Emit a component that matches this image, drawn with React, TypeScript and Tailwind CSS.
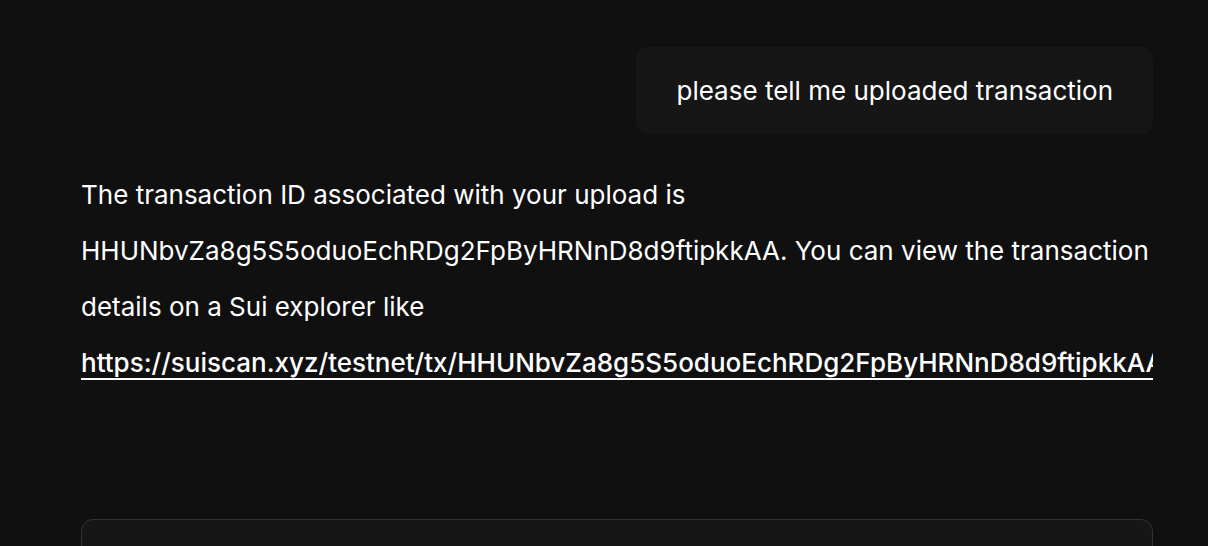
import React from "react";

export default function App() {
  return (
    <div
      className="w-[1208px] h-[546px] bg-[#101010] overflow-hidden text-white"
      style={{ fontFamily: "Inter, 'Noto Sans', sans-serif" }}
    >
      <div className="w-[1072px] ml-[81px] flex flex-col">
        <div className="flex justify-end pt-[47px]">
          <div className="h-[87px] px-[40px] flex items-center rounded-[12px] bg-[#161616] text-[26px] leading-8">
            please tell me uploaded transaction
          </div>
        </div>
        <div className="mt-[33px] overflow-hidden text-[26px] leading-[56px]">
          <p>
            The transaction ID associated with your upload is
            HHUNbvZa8g5S5oduoEchRDg2FpByHRNnD8d9ftipkkAA. You can view the transaction details on a Sui
            explorer like{" "}
            <a className="font-medium underline underline-offset-[6px] decoration-[2px] whitespace-nowrap">
              https://suiscan.xyz/testnet/tx/HHUNbvZa8g5S5oduoEchRDg2FpByHRNnD8d9ftipkkAA
            </a>
            .
          </p>
        </div>
        <div className="mt-[128px] h-[80px] rounded-[12px] border border-[#333333] bg-[#161616]"></div>
      </div>
    </div>
  );
}
